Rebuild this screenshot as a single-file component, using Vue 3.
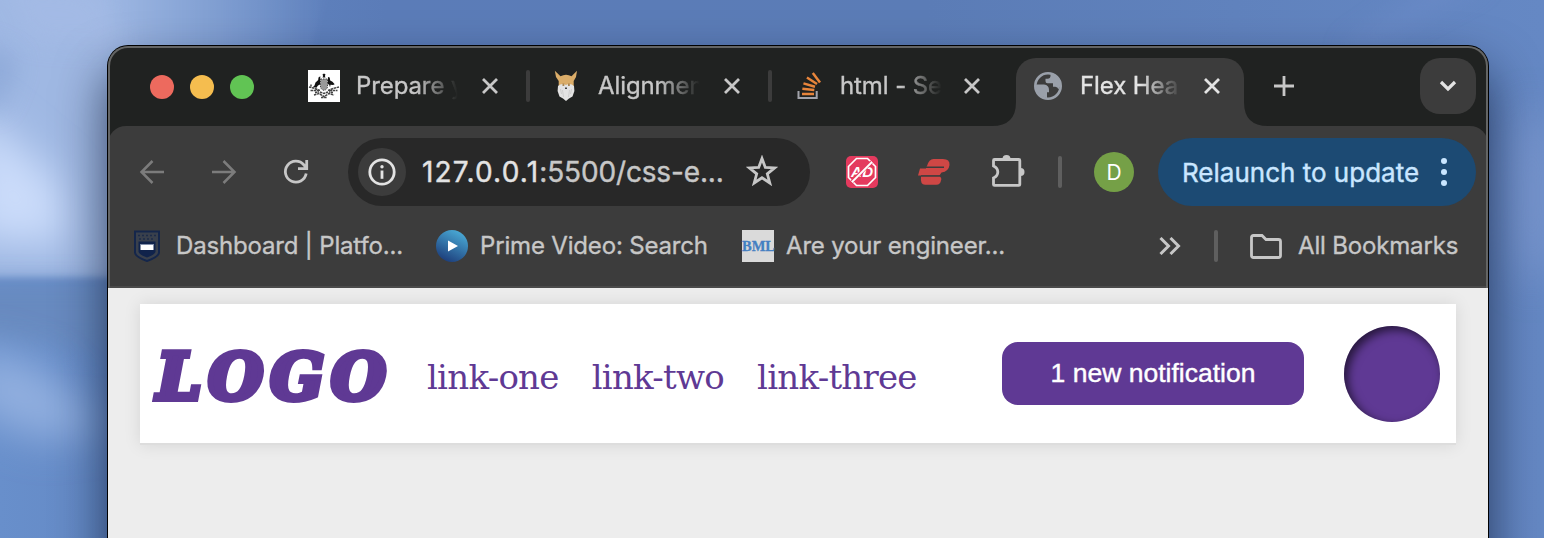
<script setup>
const tabs = [
  { id: 'gov', title: 'Prepare y' },
  { id: 'odin', title: 'Alignmen' },
  { id: 'stack', title: 'html - Se' },
]
const links = ['link-one', 'link-two', 'link-three']
const rays = [
  '',
  'translate(.3 -4) rotate(6 22 24)',
  'translate(1 -7.300) rotate(16 22 24)',
  'translate(3 -10) rotate(33 22 24)',
  'translate(6 -11.500) rotate(53 22 24)',
]
</script>

<template>
  <div class="desktop">
    <svg class="sky" viewBox="0 0 1544 538">
      <defs>
        <filter id="soft" x="-50%" y="-50%" width="200%" height="200%"><feGaussianBlur stdDeviation="20" /></filter>
        <filter id="softer" x="-50%" y="-50%" width="200%" height="200%"><feGaussianBlur stdDeviation="12" /></filter>
        <filter id="edge" x="-20%" y="-20%" width="140%" height="140%"><feGaussianBlur stdDeviation="3" /></filter>
        <linearGradient id="haze" x1="0" x2="1" y1="0" y2="0"><stop offset="0" stop-color="#9fb8e3" /><stop offset=".35" stop-color="#9fb8e3" /><stop offset="1" stop-color="#9fb8e3" stop-opacity="0" /></linearGradient>
      </defs>
      <path d="M-20-20H330L250 278H-20z" fill="url(#haze)" filter="url(#edge)" />
      <path d="M-30 105L60 180 70 245-30 240z" fill="#cbdcfa" filter="url(#soft)" />
      <path d="M0-20L30 40 130 45 90-10z" fill="#a5bbe6" opacity=".7" filter="url(#softer)" />
      <path d="M-20 110L0 110 20 60-20 40z" fill="#89a5d6" opacity=".7" filter="url(#softer)" />
      <path d="M-30 283H120V350L-30 340z" fill="#678ac0" filter="url(#softer)" />
      <path d="M-30 345L40 365 110 430 40 440-30 410z" fill="#91afdf" filter="url(#soft)" />
      <path d="M1440-20H1490L1360 50H1340z" fill="#6f8dca" opacity=".5" filter="url(#softer)" />
      <ellipse cx="1532" cy="195" rx="24" ry="90" fill="#819bd2" opacity=".7" filter="url(#soft)" />
    </svg>
    <div class="window">
      <div class="tabstrip">
        <div class="lights"><i class="red"></i><i class="amber"></i><i class="green"></i></div>
        <div v-for="t in tabs" :key="t.id" class="tab" :class="t.id">
          <svg v-if="t.id === 'gov'" class="fav" viewBox="0 0 32 32">
            <rect width="32" height="32" fill="#fff" />
            <g fill="#111">
              <path d="M14.500 4.500l1.500-1 1.500 1-.6 1.500.6 1.500h-3l.6-1.500z" />
              <path d="M12.300 6.300l-1.800 1.200-.3 2.500-2.700 2.500-1 3L4 18l3-.8 1.200.8 1.800-2.500 2-1z" />
              <path d="M20 7l1.700.6.5 3 2.300 1.200 2.200 2.400-1.700.8-2.500-.3-.5 2.500-.8-2.500-1.700-1z" />
            </g>
            <path d="M12.500 9h7v8q-.5 2.500-3.500 3.500-3-1-3.500-3.500z" fill="#999" stroke="#444" stroke-dasharray="1.500 1" />
            <path d="M1 17l6 1.500 5 2M31 17l-6 1.500-5 2M3 14.500v2M2.500 20.500h8M21.500 20.500h8M7 22.500l4-.5M25 22.500l-4-.5M6 25l5-1.500 5 3 5-3 5 1.500M12 22l4 1.500 4-1.500M13 27.500h6" fill="none" stroke="#444" stroke-width="1.500" stroke-dasharray="2.500 .6" />
          </svg>
          <svg v-else-if="t.id === 'odin'" class="fav" viewBox="0 0 32 32">
            <path d="M4.800.8l4.200 4 1.500 1.500q5.500-3 11 0L23 4.800l4-4-1 6.200-2.300 4v6H8.700v-6L6 7z" fill="#dbad69" />
            <path d="M8 16q4-3.500 8-1 4-2.500 8 1l.4 5-1.900 5.500-3.500 2L16 31l-3-2.500-3.500-2L7.600 21z" fill="#e3e3e3" />
            <path d="M12.500 13.500h1.800v2.500h-1.800zM18 13.500h1.800v2.500H18z" fill="#a98550" />
            <path d="M15 17.500h2v1.500h-2z" fill="#444" />
            <path d="M12.500 20l1 7M19.500 20l-1 7M10.500 19l1 5M21.500 19l-1 5" stroke="#c8c8c8" stroke-width=".8" fill="none" />
          </svg>
          <svg v-else class="fav" viewBox="0 0 32 32">
            <path d="M6.500 21v7h18.200v-7" fill="none" stroke="#a2a3ab" stroke-width="2" />
            <g stroke="#e8853b" stroke-width="2.500">
              <path v-for="r in rays" :key="r" d="M10 24H22" :transform="r || null" />
            </g>
          </svg>
          <span class="label">{{ t.title }}</span>
          <svg class="close" viewBox="0 0 16 16"><path d="M1 1l14 14M15 1L1 15" /></svg>
          <i v-if="t.id !== 'stack'" class="sep"></i>
        </div>
        <div class="tab active">
          <svg class="foot left" viewBox="0 0 24 24"><path d="M24 0v24H0Q24 24 24 0z" /></svg>
          <svg class="foot right" viewBox="0 0 24 24"><path d="M0 0v24H24Q0 24 0 0z" /></svg>
          <svg class="fav" viewBox="0 0 32 32">
            <circle cx="16" cy="16" r="12.700" fill="none" stroke="#9aa0aa" stroke-width="2.600" />
            <path d="M18.500 3.500v2.300q0 3-3 3h-2v2.400q0 2 2 2h5.500v3.600h2.300q2.500.3 3 2.400L28.500 16l-1-6.500-4-4.500zM3.500 14.500h8.500q5 .5 5 5.500v2.300h-2v6L9 26l-4.500-5z" fill="#9aa0aa" />
          </svg>
          <span class="label">Flex Hea</span>
          <svg class="close" viewBox="0 0 16 16"><path d="M1 1l14 14M15 1L1 15" /></svg>
        </div>
        <svg class="plus" viewBox="0 0 20 20"><path d="M10 0v20M0 10h20" /></svg>
        <div class="tabmenu"><svg viewBox="0 0 18 12"><path d="M2 2l7 7 7-7" /></svg></div>
      </div>

      <div class="toolbar">
        <svg class="nav dim" viewBox="0 0 24 24"><path d="M24 12H2M12.500 1L1.500 12l11 11" /></svg>
        <svg class="nav dim fwd" viewBox="0 0 24 24"><path d="M0 12h22M11.500 1l11 11-11 11" /></svg>
        <svg class="nav reload" viewBox="0 0 24 24"><path d="M22.200 13.500A10.500 10.500 0 1 1 20 5L22 8M22.700 0v8.700H14" /></svg>
        <div class="omnibox">
          <div class="info">
            <svg viewBox="0 0 28 28"><circle cx="14" cy="14" r="12.200" fill="none" stroke="#e3e3e3" stroke-width="2.800" /><path d="M14 12.500v8.300" stroke="#e3e3e3" stroke-width="2.800" /><circle cx="14" cy="8.700" r="1.700" fill="#e3e3e3" /></svg>
          </div>
          <span class="url"><b>127.0.0.1</b>:5500/css-e...</span>
          <svg class="star" viewBox="0 0 32 32"><path d="M16 3.500l3.300 9 9.400.4-7.400 5.900 2.500 9.200-7.800-5.200L8.200 28l2.500-9.200-7.400-5.900 9.400-.4z" /></svg>
        </div>
        <svg class="ext adb" viewBox="0 0 32 32">
          <rect width="32" height="32" rx="5" fill="#e43a5e" />
          <path d="M10.500 2.500h11l8 8v11l-8 8h-11l-8-8v-11z" fill="none" stroke="#fff" stroke-width="1.700" />
          <text x="5" y="20.500" class="adtext" textLength="22">AD</text>
          <path d="M25.500 6L6 25.500" stroke="#e43a5e" stroke-width="3.600" />
          <path d="M26 6L6 26" stroke="#fff" stroke-width="1.800" />
        </svg>
        <svg class="ext vpn" viewBox="0 0 32 32">
          <path d="M15.500 3H25q7 0 6.500 6-.8 6.500-8 7.500-2 3-2 3H0l2-7h6q-.5-1 1-2.500Q11 3 15.500 3z" fill="#cf4745" />
          <path d="M7 11.300H26M3 20H24" fill="none" stroke="#3c3c3c" stroke-width="1.500" />
          <path d="M3 20.800H22q1.500.5 1.300 2.500-.8 5.500-5 5.500H7q-5-.3-4-8z" fill="#cf4745" />
        </svg>
        <svg class="puzzle" viewBox="0 0 34 34">
          <path d="M5 5.800h24.300q1 0 1 1v23.900q0 1-1 1H5q-1 0-1-1v-6.500q4.300-2 4.300-6t-4.300-6V6.800q0-1 1-1z" transform="translate(-1.500 -.3)" />
          <path class="solid" d="M11.500 5a4 4 0 0 1 8 0zM29.500 14a4 4 0 0 1 0 8z" />
        </svg>
        <i class="vbar"></i>
        <div class="avatar">D</div>
        <div class="relaunch"><span>Relaunch to update</span><svg viewBox="0 0 6 28"><circle cx="3" cy="3" r="3" /><circle cx="3" cy="14" r="3" /><circle cx="3" cy="25" r="3" /></svg></div>
      </div>

      <div class="bookmarks">
        <svg class="shield" viewBox="0 0 26 32">
          <path d="M1 1.500h24v21q0 4-12 8.500Q1 26.500 1 22.500z" fill="#39404c" stroke="#14264b" stroke-width="2" />
          <path d="M4 5.500h18M5 9h16" stroke="#1d2b48" stroke-width="1.600" stroke-dasharray="2 2" />
          <path d="M4.500 11.500h17V22q-1 3-8.500 5.500Q5.500 25 4.500 22z" fill="#10234b" />
          <rect x="6.500" y="14.500" width="13" height="5.500" fill="#fff" />
          <path d="M6 14.500h14" stroke="#8390ab" />
        </svg>
        <span class="bm b1">Dashboard | Platfo...</span>
        <svg class="prime" viewBox="0 0 32 32">
          <defs><linearGradient id="pv" x1=".75" y1="0" x2=".25" y2="1"><stop offset="0" stop-color="#4badd8" /><stop offset="1" stop-color="#1b3a78" /></linearGradient></defs>
          <circle cx="16" cy="16" r="16" fill="url(#pv)" /><path d="M12 10.500l10 5.500-10 5.500z" fill="#fff" />
        </svg>
        <span class="bm b2">Prime Video: Search</span>
        <div class="bml">BML</div>
        <span class="bm b3">Are your engineer...</span>
        <svg class="more" viewBox="0 0 22 18"><path d="M1.500 1L9.500 9l-8 8M11.500 1L19.500 9l-8 8" /></svg>
        <i class="vbar"></i>
        <svg class="folder" viewBox="0 0 32 26"><path d="M3.500 2.500h8.500l4 4h12.500q2 0 2 2v14q0 2-2 2h-25q-2 0-2-2v-18q0-2 2-2z" /></svg>
        <span class="bm b4">All Bookmarks</span>
      </div>

      <main class="page">
        <header class="header">
          <div class="logo">LOGO</div>
          <nav class="links"><a v-for="l in links" :key="l">{{ l }}</a></nav>
          <button class="notif">1 new notification</button>
          <div class="profile"></div>
        </header>
      </main>
    </div>
  </div>
</template>

<style>
body { margin: 0; overflow: hidden; }
</style>

<style scoped>
* { box-sizing: border-box; }
svg { display: block; flex: none; }
.desktop {
  position: relative;
  width: 1544px;
  height: 538px;
  overflow: hidden;
  padding: 46px 0 0 108px;
  font-family: Inter, "Liberation Sans", sans-serif;
  background: linear-gradient(90deg, #688fcb 0, #5b7cb8 25%, #5b7cb6 60%, #6588c4 100%);
}
.sky { position: absolute; inset: 0; width: 1544px; height: 538px; }
.window {
  position: relative;
  width: 1380px;
  height: 560px;
  border-radius: 20px 20px 0 0;
  background: #202221;
  box-shadow: 0 0 0 1px #000, 0 26px 50px 2px rgba(5, 15, 40, .65);
}
.window::after {
  content: "";
  position: absolute;
  inset: 0;
  height: 240px;
  border: 2px solid #646565;
  border-bottom: 0;
  border-radius: 20px 20px 0 0;
  pointer-events: none;
}
.tabstrip { display: flex; height: 80px; padding: 12px 12px 0 42px; }
.lights { display: flex; gap: 16px; width: 158px; padding-top: 17px; }
.lights i { width: 24px; height: 24px; border-radius: 50%; }
.red { background: #ed6a5e; }
.amber { background: #f5bd4f; }
.green { background: #61c454; }
.tab { display: flex; align-items: center; width: 242px; height: 56px; flex: none; }
.tab.stack { width: 224px; }
.fav { width: 32px; height: 32px; }
.label {
  width: 104px;
  margin-left: 16px;
  white-space: nowrap;
  font-size: 24px;
  line-height: 32px;
  color: #c7c7c7;
  -webkit-text-stroke: .35px;
  letter-spacing: -.1px;
  -webkit-mask-image: linear-gradient(90deg, #000 58%, transparent 98%);
  mask-image: linear-gradient(90deg, #000 58%, transparent 98%);
}
.close { width: 16px; height: 16px; margin-left: 22px; fill: none; stroke: #c7c7c7; stroke-width: 2.8; }
.stack .close, .active .close { margin-left: 20px; }
.sep { width: 4px; height: 32px; margin-left: 28px; border-radius: 2px; background: #3c3c3c; }
.active {
  position: relative;
  width: 228px;
  height: 68px;
  padding: 0 0 12px 16px;
  border-radius: 20px 20px 0 0;
  background: #3c3c3c;
}
.active .label { color: #e3e3e3; }
.active .close { stroke: #e3e3e3; }
.foot { position: absolute; bottom: 0; width: 24px; height: 24px; fill: #3c3c3c; }
.foot.left { left: -24px; }
.foot.right { right: -24px; }
.plus { width: 20px; height: 20px; margin: 18px 0 0 30px; stroke: #c7c7c7; stroke-width: 2.8; }
.tabmenu { display: grid; place-items: center; width: 56px; height: 56px; margin-left: auto; border-radius: 20px; background: #3c3c3c; }
.tabmenu svg { width: 18px; height: 12px; fill: none; stroke: #e3e3e3; stroke-width: 3.2; }
.toolbar {
  display: flex;
  align-items: center;
  height: 92px;
  padding: 0 12px 0 32px;
  border-radius: 18px 18px 0 0;
  background: #3c3c3c;
}
.nav { width: 24px; height: 24px; fill: none; stroke: #c7c7c7; stroke-width: 2.8; overflow: visible; }
.dim { stroke: #7c7c7c; stroke-width: 2.5; }
.fwd { margin-left: 48px; }
.reload { margin-left: 48px; }
.omnibox { display: flex; align-items: center; width: 462px; height: 68px; margin-left: 40px; padding-left: 10px; border-radius: 34px; background: #282828; }
.info { display: grid; place-items: center; width: 48px; height: 48px; border-radius: 50%; background: #3c3c3c; }
.info svg { width: 28px; height: 28px; }
.url { width: 324px; margin-left: 16px; font-size: 28px; color: #c7c7c7; white-space: nowrap; letter-spacing: -.15px; -webkit-text-stroke: .4px; }
.url b { font-weight: 400; color: #e3e3e3; letter-spacing: 1.2px; }
.star { width: 32px; height: 32px; fill: none; stroke: #c7c7c7; stroke-width: 2.8; margin-top: -2px; }
.ext { width: 32px; height: 32px; }
.adb { margin-left: 36px; }
.adtext { font: italic 700 15px "Liberation Sans", sans-serif; fill: #fff; }
.vpn { margin-left: 40px; }
.puzzle { width: 34px; height: 34px; margin: -2px 0 0 41px; fill: none; stroke: #c7c7c7; stroke-width: 2.8; }
.puzzle .solid { fill: #c7c7c7; stroke: none; }
.vbar { width: 4px; height: 32px; border-radius: 2px; background: #5f5f5f; }
.toolbar .vbar { margin-left: 33px; }
.avatar { display: grid; place-items: center; width: 40px; height: 40px; margin-left: 32px; border-radius: 50%; background: #75a047; color: #fff; font-size: 21px; }
.relaunch { display: flex; align-items: center; width: 318px; height: 68px; margin-left: 24px; padding-left: 24px; border-radius: 34px; background: #1c4a73; color: #c9e6ff; font-size: 26px; white-space: nowrap; -webkit-text-stroke: .4px; }
.relaunch span { width: 259px; padding-top: 1px; }
.relaunch svg { width: 6px; height: 28px; fill: #c9e6ff; }
.bookmarks {
  display: flex;
  align-items: center;
  height: 70px;
  padding: 0 0 12px 26px;
  background: #3c3c3c;
  border-bottom: 2px solid #4a4a4a;
}
.bookmarks + .page { margin-top: 0; }
.bm { flex: none; font-size: 24px; line-height: 32px; color: #c7c7c7; white-space: nowrap; letter-spacing: -.17px; -webkit-text-stroke: .35px; }
.shield { width: 26px; height: 32px; }
.b1 { width: 260px; margin-left: 16px; }
.prime { width: 32px; height: 32px; }
.b2 { width: 262px; margin-left: 12px; }
.bml { display: grid; place-items: center; width: 32px; height: 32px; background: #dadada; color: #4480c2; font: 700 14.5px "Liberation Serif", serif; -webkit-text-stroke: .3px; }
.b3 { width: 373px; margin-left: 12px; }
.more { width: 22px; height: 18px; fill: none; stroke: #c7c7c7; stroke-width: 3; }
.bookmarks .vbar { margin-left: 33px; }
.folder { width: 32px; height: 26px; margin-left: 32px; fill: none; stroke: #c7c7c7; stroke-width: 2.8; }
.b4 { margin-left: 16px; }
.page { height: 318px; padding: 16px 32px; background: #ededed; }
.header {
  display: flex;
  align-items: center;
  height: 141px;
  padding: 0 16px 0 12px;
  background: #fff;
  border-bottom: 2px solid #ddd;
  box-shadow: 0 0 16px rgba(0, 0, 0, .1);
}
.logo { width: 275px; padding: 6px 0 0 5px; color: #5f3994; font: italic 900 63px/80px "DejaVu Serif", serif; letter-spacing: 7px; -webkit-text-stroke: 6px #5f3994; }
.links { display: flex; gap: 33px; width: 575px; padding-top: 7px; }
.links a { color: #5f3994; font: 34px/40px "DejaVu Serif", serif; letter-spacing: -.75px; white-space: nowrap; }
.notif { flex: none; width: 302px; height: 63px; padding: 0; border: 0; border-radius: 16px; background: #5f3994; color: #fff; font: 26.5px "Liberation Sans", sans-serif; -webkit-text-stroke: .4px #fff; }
.profile { flex: none; width: 96px; height: 96px; margin-left: 40px; border-radius: 50%; background: #5f3994; box-shadow: inset 4px 4px 10px rgba(0, 0, 0, .6); }
</style>
